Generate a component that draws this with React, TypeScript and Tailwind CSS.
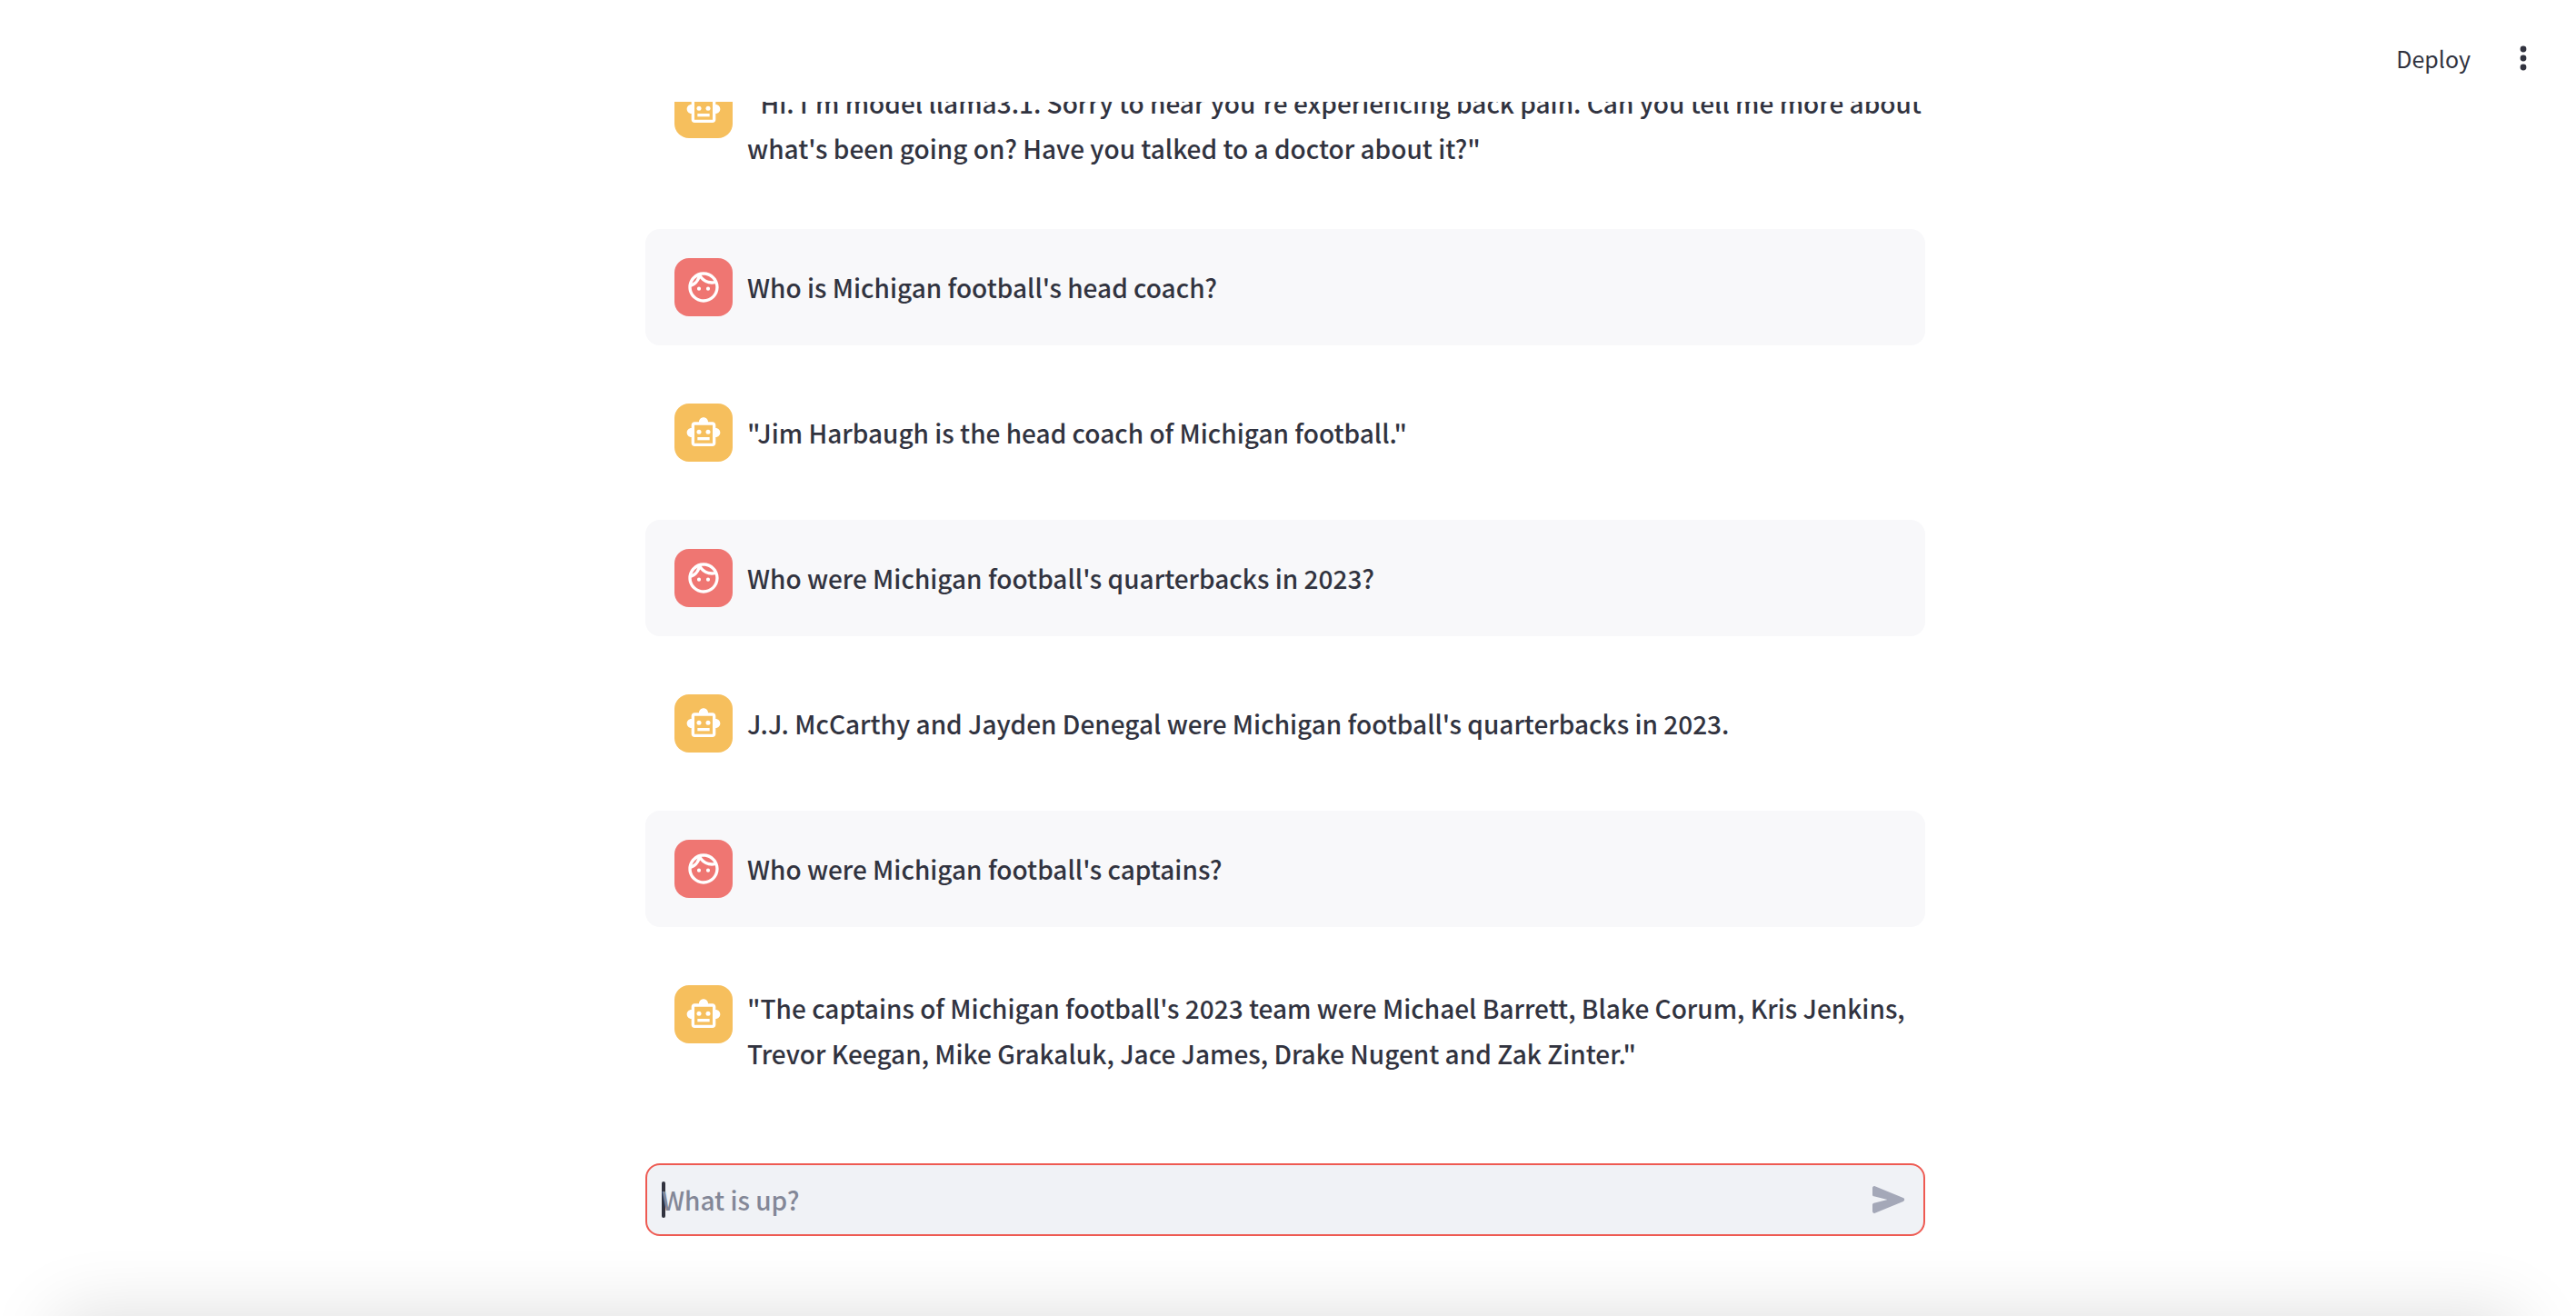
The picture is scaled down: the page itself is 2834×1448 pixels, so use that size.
import { MdOutlineFace } from "react-icons/md";

type Message = { role: "user" | "assistant"; text: string };

const messages: Message[] = [
  {
    role: "assistant",
    text: "\"Hi. I'm model llama3.1. Sorry to hear you're experiencing back pain. Can you tell me more about what's been going on? Have you talked to a doctor about it?\"",
  },
  { role: "user", text: "Who is Michigan football's head coach?" },
  { role: "assistant", text: '"Jim Harbaugh is the head coach of Michigan football."' },
  { role: "user", text: "Who were Michigan football's quarterbacks in 2023?" },
  {
    role: "assistant",
    text: "J.J. McCarthy and Jayden Denegal were Michigan football's quarterbacks in 2023.",
  },
  { role: "user", text: "Who were Michigan football's captains?" },
  {
    role: "assistant",
    text: "\"The captains of Michigan football's 2023 team were Michael Barrett, Blake Corum, Kris Jenkins, Trevor Keegan, Mike Grakaluk, Jace James, Drake Nugent and Zak Zinter.\"",
  },
];

function RobotIcon() {
  return (
    <svg viewBox="0 0 24 24" className="size-10" fill="currentColor">
      <path d="M20 9V7c0-1.1-.9-2-2-2h-3c0-1.66-1.34-3-3-3S9 3.34 9 5H6c-1.1 0-2 .9-2 2v2c-1.66 0-3 1.34-3 3s1.34 3 3 3v4c0 1.1.9 2 2 2h12c1.1 0 2-.9 2-2v-4c1.66 0 3-1.34 3-3s-1.34-3-3-3zm-2 10H6V7h12v12z" />
      <circle cx="9" cy="11.5" r="1.5" />
      <circle cx="15" cy="11.5" r="1.5" />
      <path d="M8 15h8v2H8z" />
    </svg>
  );
}

function ChatMessage({ role, text }: Message) {
  const isUser = role === "user";
  return (
    <article
      className={`flex shrink-0 items-start gap-4 rounded-2xl py-8 pl-8 ${isUser ? "bg-[#f8f8fa]" : ""}`}
    >
      <div
        className={`flex size-16 shrink-0 items-center justify-center rounded-2xl text-white ${
          isUser ? "bg-[#ef7672]" : "bg-[#f6bf5d]"
        }`}
      >
        {isUser ? <MdOutlineFace size={40} /> : <RobotIcon />}
      </div>
      <div className="flex min-h-16 min-w-0 flex-1 items-center">
        <p className="text-[28px] leading-[50px] font-medium">{text}</p>
      </div>
    </article>
  );
}

export default function App() {
  return (
    <div className="relative flex h-screen flex-col overflow-hidden bg-white font-['Noto_Sans_CJK_SC',sans-serif] text-[#31333f]">
      <header className="flex h-28 shrink-0 items-start justify-end gap-10 pt-10 pr-10">
        <button type="button" className="text-[25px] leading-12">
          Deploy
        </button>
        <button type="button" aria-label="Main menu" className="flex h-12 w-9 items-center justify-center">
          <svg viewBox="0 0 8 28" className="h-7 w-2" fill="currentColor">
            <circle cx="4" cy="4" r="3.4" />
            <circle cx="4" cy="14" r="3.4" />
            <circle cx="4" cy="24" r="3.4" />
          </svg>
        </button>
      </header>

      <main className="mr-1.5 flex min-h-0 flex-1 flex-col">
        <section className="flex min-h-0 flex-1 flex-col justify-end overflow-hidden pb-16">
          <div className="mx-auto flex w-full max-w-[1408px] flex-col gap-8">
            {messages.map((message) => (
              <ChatMessage key={message.text} {...message} />
            ))}
          </div>
        </section>

        <form
          className="relative mx-auto mb-22 flex h-20 w-full max-w-[1408px] shrink-0 items-center rounded-2xl border-2 border-[#ee5a52] bg-[#f0f2f6]"
          onSubmit={(event) => event.preventDefault()}
        >
          <span className="absolute left-4 h-10 w-1 rounded-sm bg-[#31333f]" />
          <input
            type="text"
            aria-label="What is up?"
            placeholder="What is up?"
            className="relative h-full min-w-0 flex-1 bg-transparent pl-4 text-[28px] font-medium outline-none placeholder:text-[#838797]"
          />
          <button type="submit" aria-label="Send message" className="flex h-full w-19 items-center justify-center text-[#a4a8b8]">
            <svg viewBox="0 0 36 30" className="h-[30px] w-9" fill="currentColor">
              <path d="M0 2.2C0 .7 1.3-.4 2.8.2L33.8 13.1C35.6 13.8 35.6 16.2 33.8 16.9L2.8 29.8C1.3 30.4 0 29.3 0 27.8V20.6C0 19.6.7 18.9 1.6 18.7L16.5 15L1.6 11.3C.7 11.1 0 10.4 0 9.4Z" />
            </svg>
          </button>
        </form>
      </main>

      <div className="pointer-events-none absolute inset-x-0 bottom-0 h-24 overflow-hidden">
        <div className="absolute inset-x-16 top-full h-24 shadow-[0_0_80px_rgba(0,0,0,0.14)]" />
      </div>
    </div>
  );
}
